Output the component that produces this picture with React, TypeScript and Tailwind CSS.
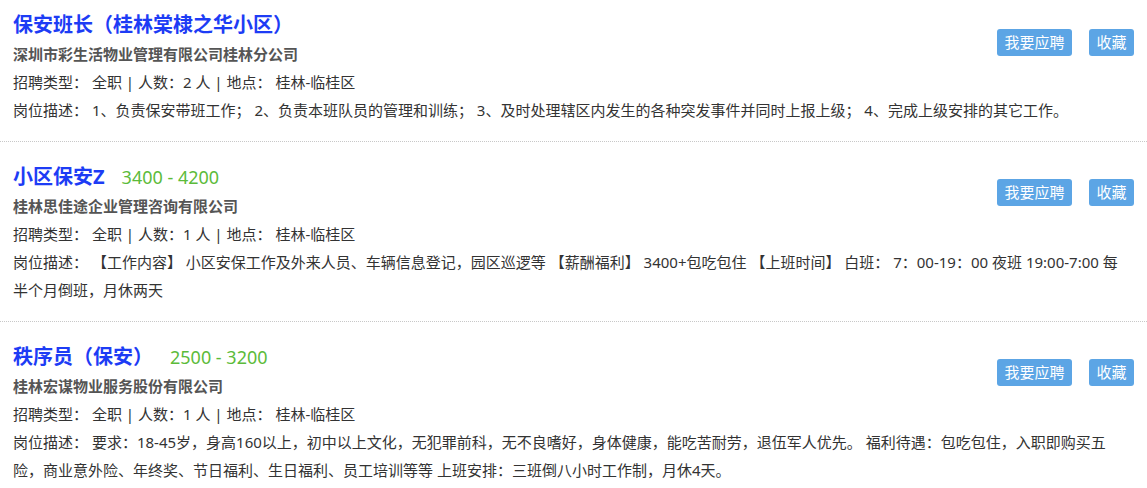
import React from "react";

type Job = {
  title: string;
  salary?: string;
  company: string;
  count: string;
  desc: string[];
};

const jobs: Job[] = [
  {
    title: "保安班长（桂林棠棣之华小区）",
    company: "深圳市彩生活物业管理有限公司桂林分公司",
    count: "2",
    desc: [
      "岗位描述： 1、负责保安带班工作； 2、负责本班队员的管理和训练； 3、及时处理辖区内发生的各种突发事件并同时上报上级； 4、完成上级安排的其它工作。",
    ],
  },
  {
    title: "小区保安Z",
    salary: "3400 - 4200",
    company: "桂林思佳途企业管理咨询有限公司",
    count: "1",
    desc: [
      "岗位描述： 【工作内容】 小区安保工作及外来人员、车辆信息登记，园区巡逻等 【薪酬福利】 3400+包吃包住 【上班时间】 白班： 7：00-19：00 夜班 19:00-7:00 每",
      "半个月倒班，月休两天",
    ],
  },
  {
    title: "秩序员（保安）",
    salary: "2500 - 3200",
    company: "桂林宏谋物业服务股份有限公司",
    count: "1",
    desc: [
      "岗位描述： 要求：18-45岁，身高160以上，初中以上文化，无犯罪前科，无不良嗜好，身体健康，能吃苦耐劳，退伍军人优先。 福利待遇：包吃包住，入职即购买五",
      "险，商业意外险、年终奖、节日福利、生日福利、员工培训等等 上班安排：三班倒八小时工作制，月休4天。",
    ],
  },
];

export default function App() {
  return (
    <div
      className="w-[1147px] h-[488px] overflow-hidden bg-white"
      style={{ fontFamily: '"Noto Sans", "Noto Sans CJK SC", sans-serif' }}
    >
      {jobs.map((job, i) => (
        <div
          key={i}
          className={
            (i === 0 ? "pt-[10px] pb-[17px] " : "pt-[20px] pb-[17px] ") +
            "px-[13px] border-b border-dotted border-[#c8c8c8] flow-root"
          }
        >
          <div className={(i === 0 ? "mt-[19px] " : "mt-[17px] ") + "float-right flex gap-[17px] ml-4"}>
            <button className="w-[75px] h-[27px] rounded-[3px] bg-[#5ca5e5] text-white text-[15px] leading-[27px] text-center">
              我要应聘
            </button>
            <button className="w-[45px] h-[27px] rounded-[3px] bg-[#5ca5e5] text-white text-[15px] leading-[27px] text-center">
              收藏
            </button>
          </div>
          <div className="h-[30px] leading-[30px] flex items-baseline whitespace-nowrap">
            <span className="text-[20px] font-bold text-[#1d3cf5]">{job.title}</span>
            {job.salary && (
              <span className="ml-[17px] text-[18px] font-normal text-[#5cbb3a]">{job.salary}</span>
            )}
          </div>
          <div className="text-[15px] leading-[28px] font-bold text-[#555555]">{job.company}</div>
          <div className="text-[15px] leading-[28px] text-[#333333]">
            招聘类型： 全职 | 人数：{job.count} 人 | 地点： 桂林-临桂区
          </div>
          {job.desc.map((line, j) => (
            <div key={j} className="text-[15px] leading-[28px] text-[#333333] whitespace-nowrap">
              {line}
            </div>
          ))}
        </div>
      ))}
    </div>
  );
}
